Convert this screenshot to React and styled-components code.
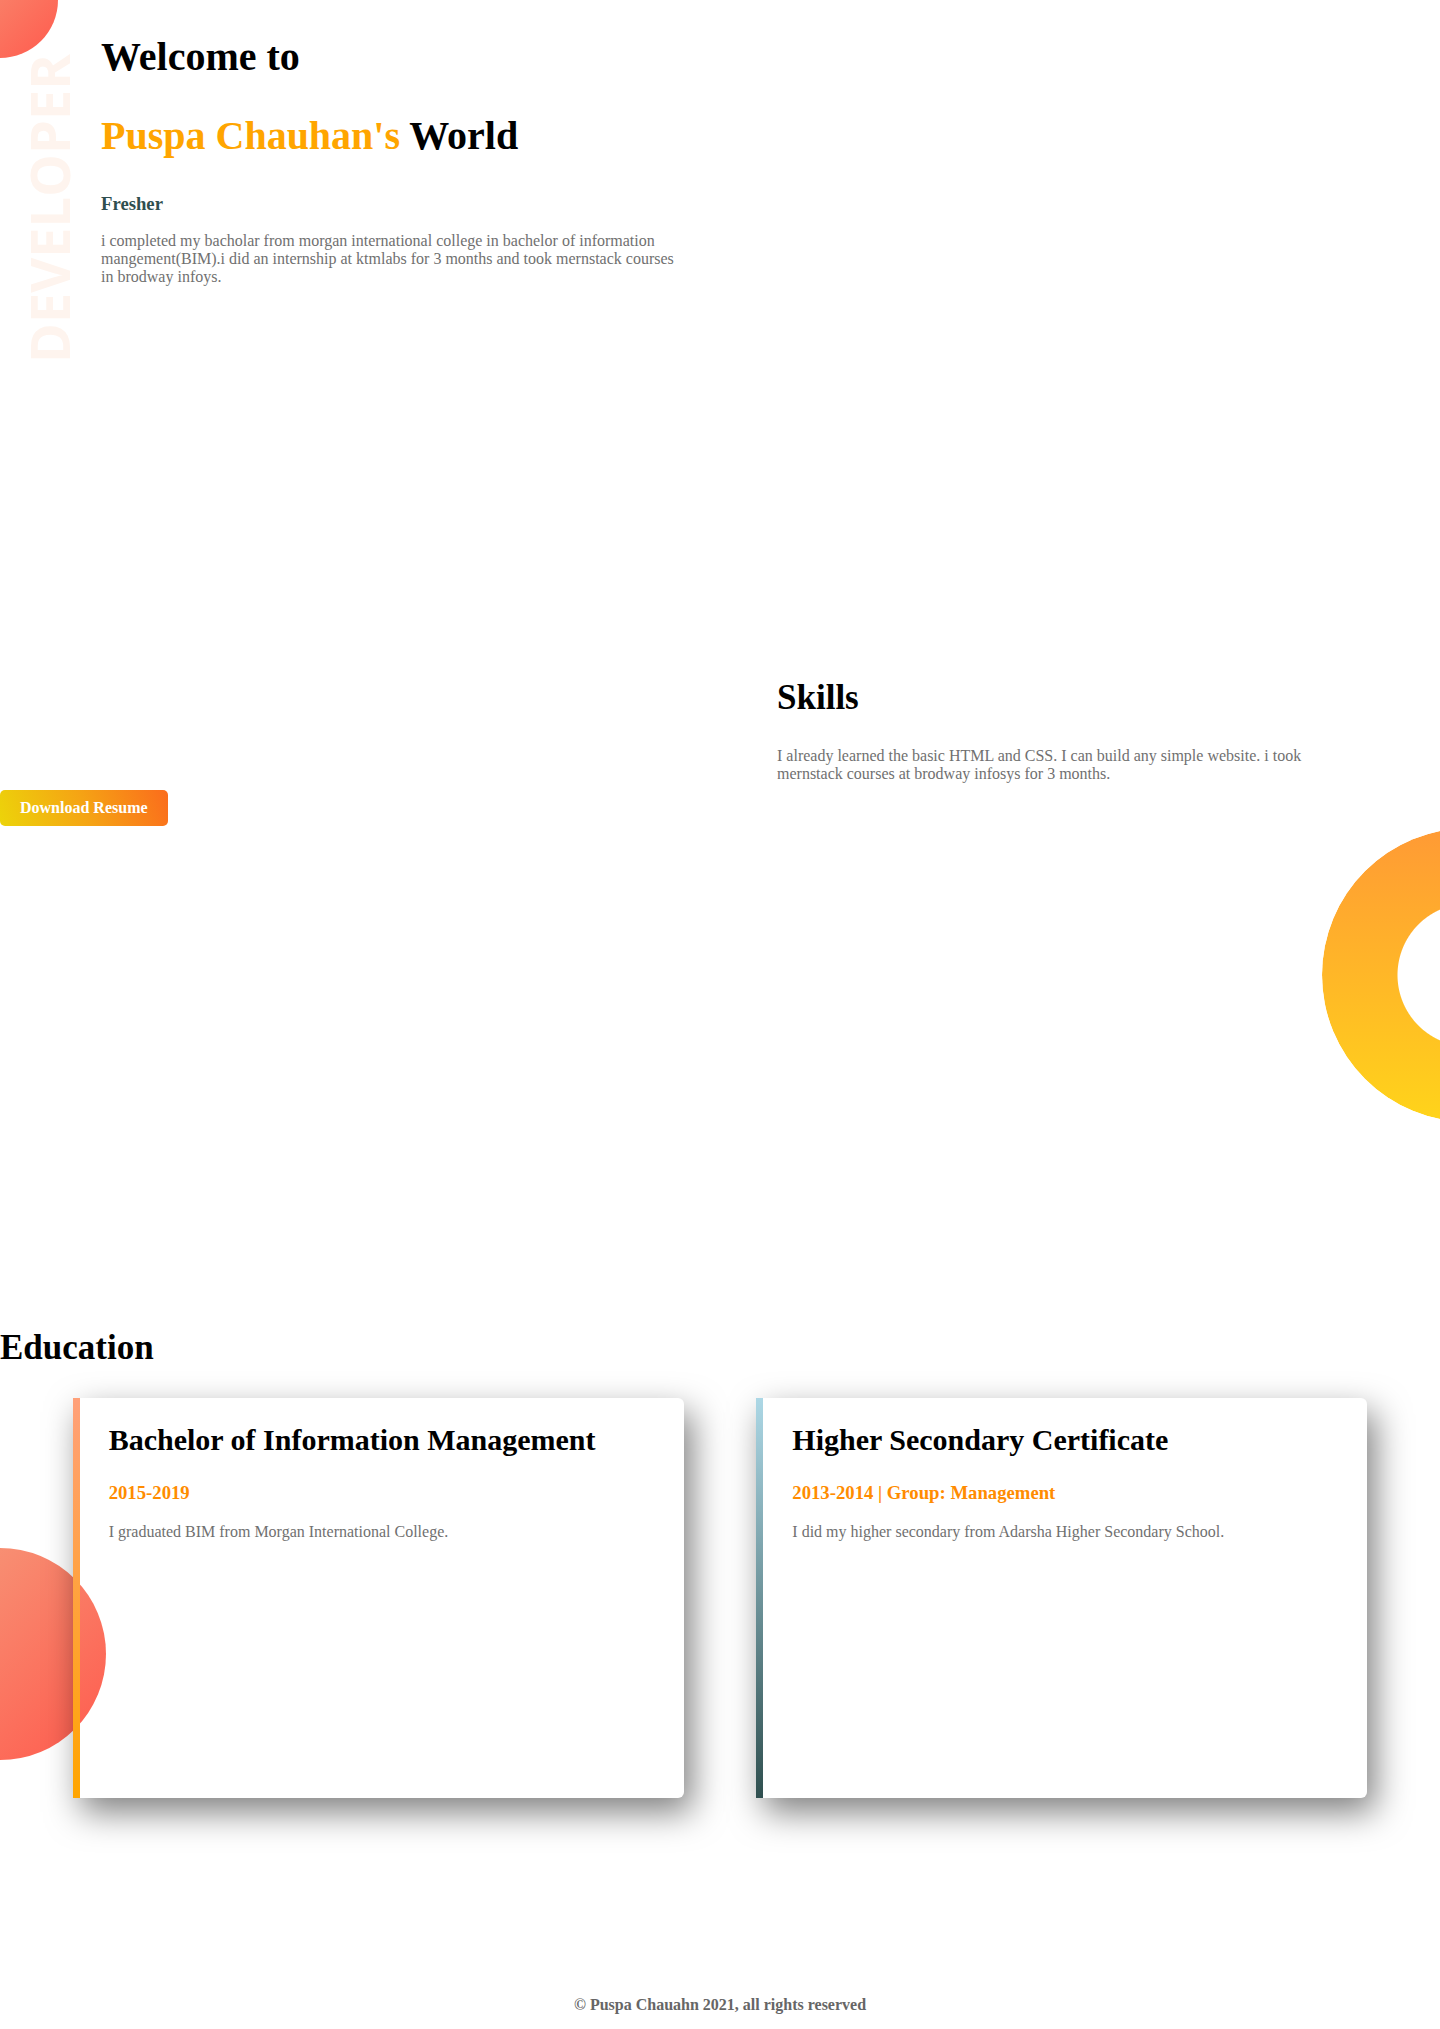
import React from "react";
import styled, { createGlobalStyle } from "styled-components";

const GlobalStyle = createGlobalStyle`
  html, body {
    margin: 0;
    padding: 0;
    background: #ffffff;
  }
  body {
    font-family: "Liberation Serif", "Times New Roman", serif;
    color: #000;
  }
  * { box-sizing: border-box; }
`;

const Page = styled.div`
  position: relative;
  overflow: hidden;
  width: 100%;
`;

const coral = `linear-gradient(135deg, #f5a07f 0%, #ff5a4d 100%)`;

const Blob = styled.div`
  position: absolute;
  border-radius: 50%;
  background: ${coral};
  width: ${(p) => p.$size}px;
  height: ${(p) => p.$size}px;
  left: ${(p) => p.$left}px;
  top: ${(p) => p.$top}px;
  z-index: 0;
`;

const VerticalLabel = styled.span`
  position: absolute;
  left: 22px;
  top: 363px;
  transform-origin: 0 0;
  transform: rotate(-90deg);
  font-family: "Open Sans", "Liberation Sans", sans-serif;
  font-weight: 700;
  font-size: 54px;
  line-height: 1;
  color: #fef4ee;
  white-space: nowrap;
  z-index: 0;
`;

const Hero = styled.section`
  position: relative;
  height: 650px;
  padding: 33px 0 0 101px;
`;

const Intro = styled.div`
  position: relative;
  z-index: 1;
`;

const Title = styled.h1`
  margin: ${(p) => (p.$second ? "32px" : "0")} 0 0;
  font-size: 40px;
  font-weight: 700;
`;

const Accent = styled.span`
  color: #ffa500;
`;

const Role = styled.h3`
  margin: 34px 0 0;
  font-size: 18.72px;
  font-weight: 700;
  color: #2f4f4f;
`;

const Text = styled.p`
  margin: ${(p) => p.$mt || 0}px 0 0;
  font-size: 16px;
  color: #707070;
  max-width: ${(p) => p.$max || "none"};
`;

const SkillsRow = styled.section`
  position: relative;
  height: 650px;
  display: grid;
  grid-template-columns: 1fr 1fr;
`;

const ButtonCell = styled.div`
  padding-top: 140px;
`;

const ResumeButton = styled.button`
  display: inline-block;
  border: 0;
  border-radius: 5px;
  padding: 9px 20px;
  font-family: "Liberation Serif", "Times New Roman", serif;
  font-size: 16px;
  font-weight: 700;
  color: #ffffff;
  background: linear-gradient(70deg, #ecd40a 0%, #f5a414 50%, #fb6c1c 100%);
  cursor: pointer;
`;

const SkillsBlock = styled.div`
  padding: 28px 0 0 57px;
`;

const SectionHeading = styled.h2`
  margin: 0 0 ${(p) => p.$mb}px;
  font-size: 35px;
  font-weight: 700;
`;

const Donut = styled.div`
  position: absolute;
  top: 178px;
  right: -176px;
  width: 294px;
  height: 294px;
  border-radius: 50%;
  background: linear-gradient(180deg, #ff9a35 0%, #ffd41a 100%);
  -webkit-mask: radial-gradient(circle, transparent 71px, #000 72px);
  mask: radial-gradient(circle, transparent 71px, #000 72px);
`;

const Education = styled.section`
  padding-top: 28px;
`;

const Cards = styled.div`
  position: relative;
  display: flex;
  justify-content: space-evenly;
`;

const Card = styled.article`
  position: relative;
  z-index: 1;
  width: 611px;
  height: 400px;
  padding: 24.6px 29px;
  border-left: 7px solid;
  border-image: ${(p) => p.$stripe} 1;
  border-radius: 0 6px 6px 0;
  box-shadow: 8px 14px 34px rgba(0, 0, 0, 0.5);
  background: transparent;
`;

const CardTitle = styled.h2`
  margin: 0;
  font-size: 30px;
  font-weight: 700;
`;

const CardMeta = styled.h3`
  margin: 25px 0 0;
  font-size: 18.72px;
  font-weight: 700;
  color: #ff8c00;
`;

const Footer = styled.footer`
  padding: 198px 0 14px;
  text-align: center;
  font-size: 16px;
  font-weight: 700;
  color: #666666;
`;

const education = [
  {
    title: "Bachelor of Information Management",
    meta: "2015-2019",
    text: "I graduated BIM from Morgan International College.",
    stripe: "linear-gradient(180deg, #ffa07a, #ffa500)",
  },
  {
    title: "Higher Secondary Certificate",
    meta: "2013-2014 | Group: Management",
    text: "I did my higher secondary from Adarsha Higher Secondary School.",
    stripe: "linear-gradient(180deg, #add8e6, #2f4f4f)",
  },
];

export default function App() {
  return (
    <Page>
      <GlobalStyle />
      <Hero>
        <Blob $size={116} $left={-58} $top={-58} />
        <VerticalLabel>DEVELOPER</VerticalLabel>
        <Intro>
          <Title>Welcome to</Title>
          <Title $second>
            <Accent>Puspa Chauhan's</Accent> World
          </Title>
          <Role>Fresher</Role>
          <Text $mt={17} $max="580px">
            i completed my bacholar from morgan international college in bachelor of information
            mangement(BIM).i did an internship at ktmlabs for 3 months and took mernstack courses
            in brodway infoys.
          </Text>
        </Intro>
      </Hero>

      <SkillsRow>
        <ButtonCell>
          <ResumeButton type="button">Download Resume</ResumeButton>
        </ButtonCell>
        <SkillsBlock>
          <SectionHeading $mb={29}>Skills</SectionHeading>
          <Text $max="580px">
            I already learned the basic HTML and CSS. I can build any simple website. i took
            mernstack courses at brodway infosys for 3 months.
          </Text>
        </SkillsBlock>
        <Donut />
      </SkillsRow>

      <Education>
        <SectionHeading $mb={30}>Education</SectionHeading>
        <Cards>
          <Blob $size={212} $left={-106} $top={150} />
          {education.map((e) => (
            <Card key={e.title} $stripe={e.stripe}>
              <CardTitle>{e.title}</CardTitle>
              <CardMeta>{e.meta}</CardMeta>
              <Text $mt={19}>{e.text}</Text>
            </Card>
          ))}
        </Cards>
      </Education>

      <Footer>© Puspa Chauahn 2021, all rights reserved</Footer>
    </Page>
  );
}
